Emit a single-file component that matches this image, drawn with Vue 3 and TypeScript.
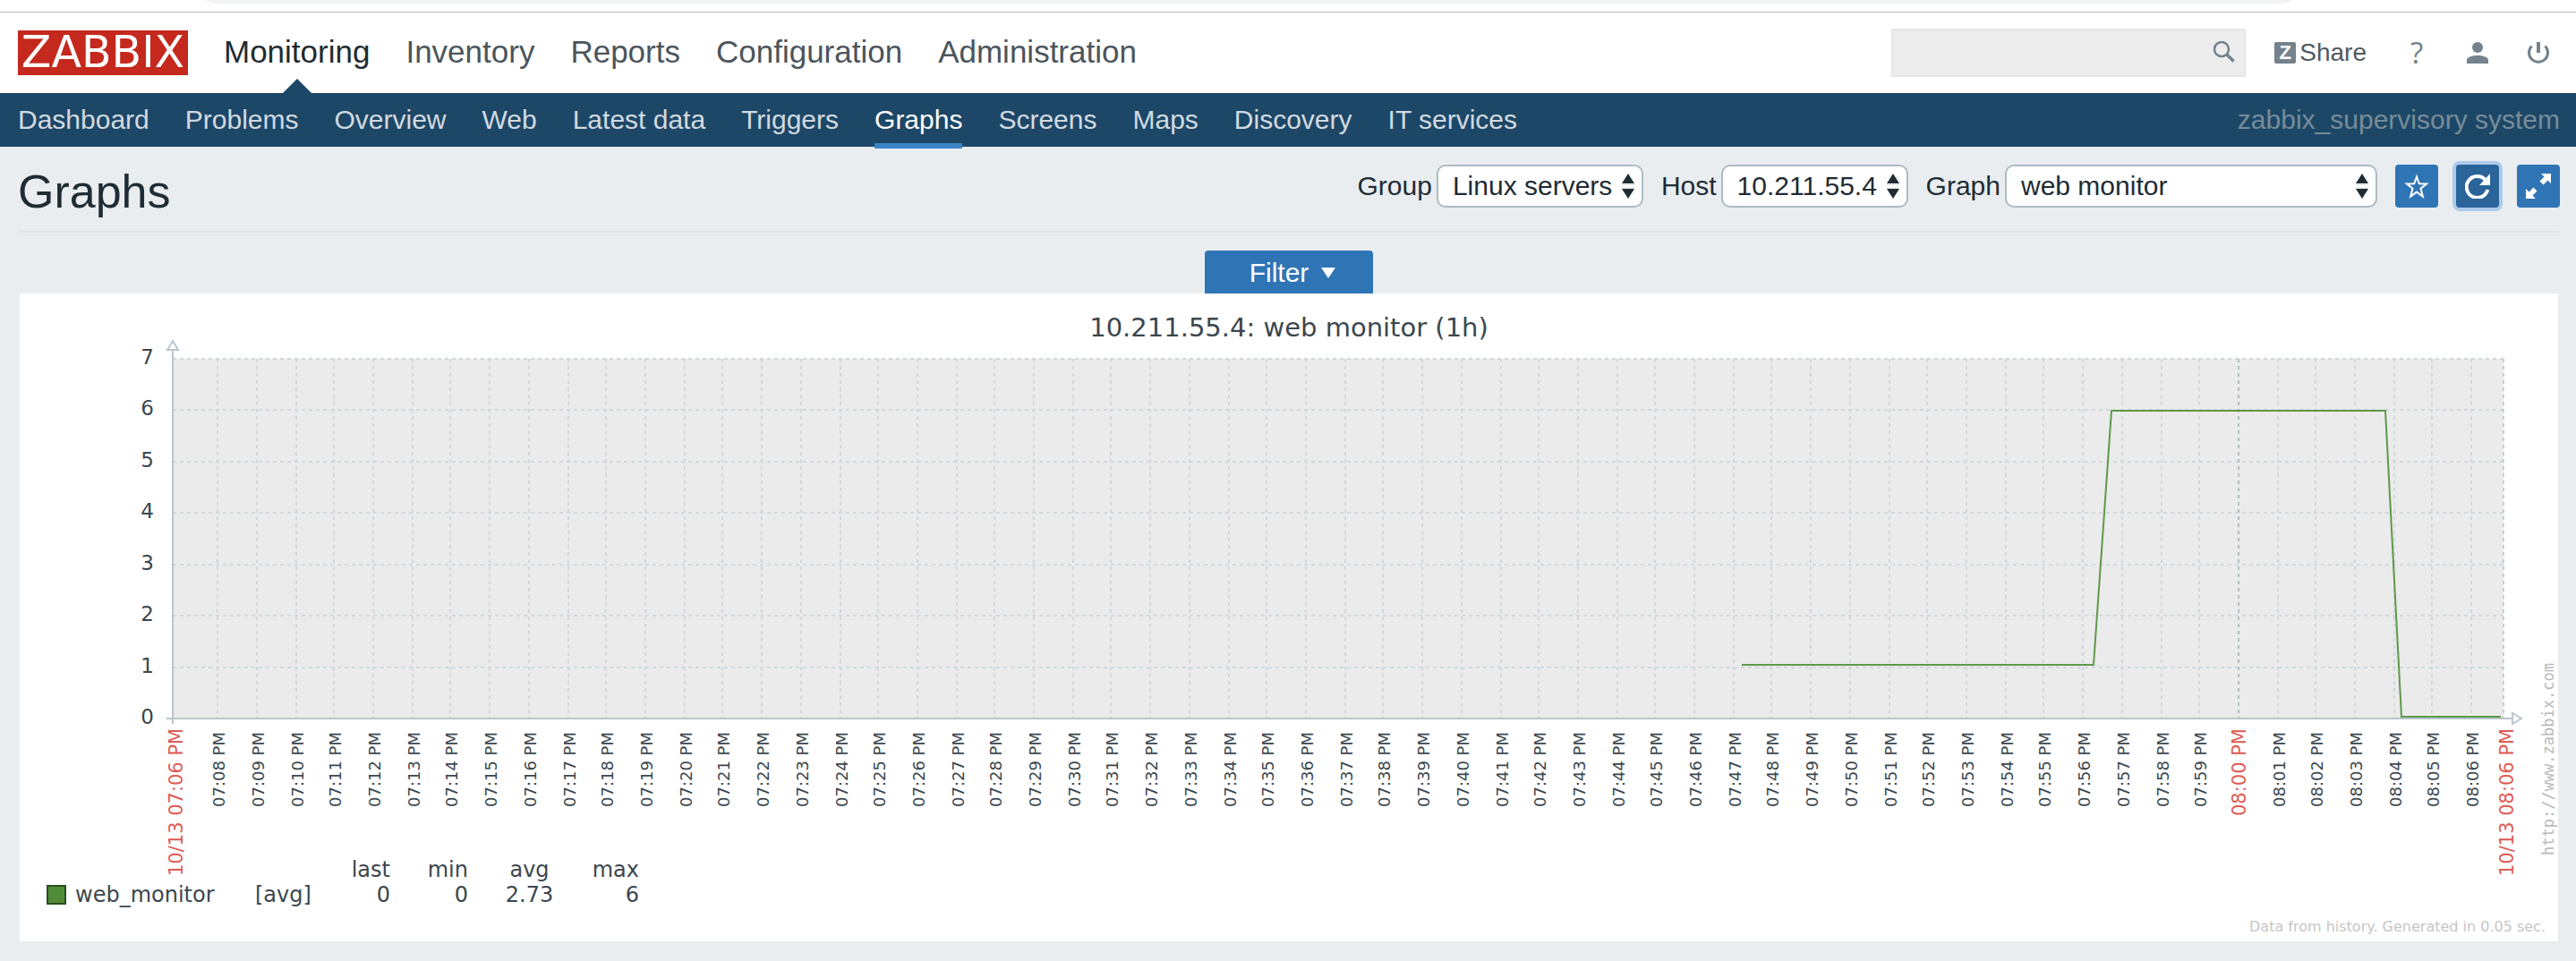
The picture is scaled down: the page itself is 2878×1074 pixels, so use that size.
<script setup lang="ts">
import { ref } from 'vue'

interface LegendRow {
  name: string
  fn: string
  last: string
  min: string
  avg: string
  max: string
}

const mainMenu: string[] = ['Monitoring', 'Inventory', 'Reports', 'Configuration', 'Administration']
const activeMain = 'Monitoring'

const subMenu: string[] = [
  'Dashboard', 'Problems', 'Overview', 'Web', 'Latest data', 'Triggers',
  'Graphs', 'Screens', 'Maps', 'Discovery', 'IT services',
]
const activeSub = 'Graphs'

const search = ref('')
const group = ref('Linux servers')
const host = ref('10.211.55.4')
const graph = ref('web monitor')

const plot = { left: 171, right: 2775, top: 21, bottom: 423 }

const levels = [7, 6, 5, 4, 3, 2, 1, 0].map((value) => ({
  value,
  y: Math.round(plot.bottom - (value * (plot.bottom - plot.top)) / 7),
}))

const pad = (n: number): string => String(n).padStart(2, '0')

const ticks = Array.from({ length: 59 }, (_, i) => {
  const minutes = 8 + i
  const hour = 7 + Math.floor(minutes / 60)
  return {
    label: `${pad(hour)}:${pad(minutes % 60)} PM`,
    x: Math.floor((221.5 + i * 43.41) / 2) * 2 + 1,
    major: minutes % 60 === 0,
  }
})

const seriesPoints = '1924,363 2317,363 2337,79 2643,79 2661,421 2772,421'

const legend: LegendRow[] = [
  { name: 'web_monitor', fn: '[avg]', last: '0', min: '0', avg: '2.73', max: '6' },
]
</script>

<template>
  <div class="page">
    <div class="browser-edge"><div class="address-bar"></div></div>

    <header class="top">
      <a class="logo" href="#">ZABBIX</a>
      <nav class="main-nav" aria-label="Main">
        <a v-for="item in mainMenu" :key="item" href="#" :class="{ active: item === activeMain }">{{ item }}</a>
      </nav>
      <form class="search" @submit.prevent>
        <input v-model="search" type="text" aria-label="Search" />
        <button type="submit" aria-label="Search">
          <svg width="24" height="24" viewBox="0 0 24 24" fill="none" stroke="#73828c">
            <circle cx="9" cy="9" r="8" stroke-width="2.500" />
            <path d="M14.5 14.5 22.5 22.5" stroke-width="3.500" />
          </svg>
        </button>
      </form>
      <div class="tools">
        <a class="share" href="#"><span class="z-badge">Z</span>Share</a>
        <a class="help" href="#">?</a>
        <a href="#" aria-label="User profile">
          <svg width="24" height="24" viewBox="0 0 24 24" fill="#73828c">
            <circle cx="12" cy="6" r="6" />
            <path d="M0 24v-4c0-3 6-5 12-5s12 2 12 5v4z" />
          </svg>
        </a>
        <a href="#" aria-label="Sign out">
          <svg width="24" height="24" viewBox="0 0 24 24" fill="none" stroke="#73828c">
            <path d="M12 0v12" stroke-width="4" />
            <path d="M4.500 4.500A10.500 10.500 0 1 0 19.500 4.500" stroke-width="3" />
          </svg>
        </a>
      </div>
    </header>

    <div class="sub">
      <nav class="sub-nav" aria-label="Monitoring">
        <a v-for="item in subMenu" :key="item" href="#" :class="{ active: item === activeSub }">{{ item }}</a>
      </nav>
      <span class="server">zabbix_supervisory system</span>
    </div>

    <main class="content">
      <div class="title-row">
        <h1>Graphs</h1>
        <form class="controls" @submit.prevent>
          <div class="field">
            <label for="group">Group</label>
            <div class="select">
              <select id="group" v-model="group"><option>Linux servers</option></select>
              <svg class="arrows" width="14" height="28" viewBox="0 0 14 28"><path d="M0 11 7 0l7 11zM0 17h14L7 28z" fill="#1f2c33" /><path d="M0 12.500h14M0 16h14" stroke="#d5d8da" /></svg>
            </div>
          </div>
          <div class="field">
            <label for="host">Host</label>
            <div class="select">
              <select id="host" v-model="host"><option>10.211.55.4</option></select>
              <svg class="arrows" width="14" height="28" viewBox="0 0 14 28"><path d="M0 11 7 0l7 11zM0 17h14L7 28z" fill="#1f2c33" /><path d="M0 12.500h14M0 16h14" stroke="#d5d8da" /></svg>
            </div>
          </div>
          <div class="field">
            <label for="graph">Graph</label>
            <div class="select wide">
              <select id="graph" v-model="graph"><option>web monitor</option></select>
              <svg class="arrows" width="14" height="28" viewBox="0 0 14 28"><path d="M0 11 7 0l7 11zM0 17h14L7 28z" fill="#1f2c33" /><path d="M0 12.500h14M0 16h14" stroke="#d5d8da" /></svg>
            </div>
          </div>
          <div class="buttons">
            <button type="button" aria-label="Add to favourites">
              <svg width="28" height="28" viewBox="0 0 28 28" fill="none" stroke="#fff" stroke-width="2">
                <path d="M14 3.500 16.800 11.300 25 11.500 18.500 16.600 20.800 25.500 14 20.600 7.200 25.500 9.500 16.600 3 11.500 11.200 11.300z" />
              </svg>
            </button>
            <button type="button" class="focused" aria-label="Reset">
              <svg width="28" height="28" viewBox="0 0 28 28">
                <path d="M22.500 6.800A12 12 0 1 0 25.300 18" fill="none" stroke="#fff" stroke-width="4" />
                <path d="M28 0v13H16z" fill="#fff" />
              </svg>
            </button>
            <button type="button" aria-label="Fullscreen">
              <svg width="28" height="28" viewBox="0 0 28 28" fill="#fff">
                <path d="M17 0h11v11l-3.500-3.500-5 5-4-4 5-5z" />
                <path d="M11 28H0V17l3.500 3.500 5-5 4 4-5 5z" />
              </svg>
            </button>
          </div>
        </form>
      </div>

      <div class="filter-row">
        <button type="button" class="filter">Filter<span class="caret"></span></button>
      </div>

      <section class="card">
        <h2>10.211.55.4: web monitor (1h)</h2>
        <svg class="plot" viewBox="0 0 2836 600" role="img" aria-label="web monitor">
          <rect :x="plot.left" :y="plot.top" :width="plot.right - plot.left" :height="plot.bottom - plot.top" fill="#ebebeb" />
          <g class="grid">
            <line v-for="l in levels.slice(0, 7)" :key="l.value" :x1="plot.left" :x2="plot.right" :y1="l.y" :y2="l.y" />
            <line v-for="t in ticks" :key="t.label" :class="{ major: t.major }" :x1="t.x" :x2="t.x" :y1="plot.top" :y2="plot.bottom" />
            <line class="edge" :x1="plot.right" :x2="plot.right" :y1="plot.top" :y2="plot.bottom" />
          </g>
          <g fill="#fff" stroke="#bac6cc" stroke-width="2">
            <path d="M171 11V429M164 423H2784" />
            <path d="M165 11 171 1l6 10z" />
            <path d="M2785 417v12l10-6z" />
          </g>
          <polyline :points="seriesPoints" fill="none" stroke="#5f984b" stroke-width="2" />
          <g class="values">
            <text v-for="l in levels" :key="l.value" x="150" :y="l.y + 6">{{ l.value }}</text>
          </g>
          <g class="times">
            <text
              v-for="t in ticks"
              :key="t.label"
              :class="{ major: t.major }"
              :transform="`translate(${t.x + 8} ${t.major ? 532 : 522}) rotate(-90)`"
            >{{ t.label }}</text>
            <text class="major" transform="translate(182 599) rotate(-90)">10/13 07:06 PM</text>
            <text class="major" transform="translate(2786 599) rotate(-90)">10/13 08:06 PM</text>
          </g>
          <text class="url" transform="translate(2831 576) rotate(-90)">http://www.zabbix.com</text>
        </svg>

        <table class="legend">
          <colgroup>
            <col class="c-name" /><col class="c-fn" /><col class="c-num" /><col class="c-num" /><col class="c-avg" /><col class="c-max" />
          </colgroup>
          <thead>
            <tr><th></th><th></th><th>last</th><th>min</th><th class="mid">avg</th><th>max</th></tr>
          </thead>
          <tbody>
            <tr v-for="row in legend" :key="row.name">
              <td class="name"><span class="swatch"></span>{{ row.name }}</td>
              <td class="fn">{{ row.fn }}</td>
              <td>{{ row.last }}</td>
              <td>{{ row.min }}</td>
              <td class="mid">{{ row.avg }}</td>
              <td>{{ row.max }}</td>
            </tr>
          </tbody>
        </table>
        <p class="generated">Data from history. Generated in 0.05 sec.</p>
      </section>
    </main>
  </div>
</template>

<style>
body {
  background: #e9edf0;
}
</style>

<style scoped>
* {
  box-sizing: border-box;
}
.page {
  min-height: 100vh;
  background: #e9edf0;
  color: #1f2c33;
  font: 30px/36px "Liberation Sans", Arial, sans-serif;
}
a {
  color: inherit;
  text-decoration: none;
}
button,
input,
select {
  font: inherit;
  color: inherit;
  margin: 0;
}
svg {
  display: block;
}
.browser-edge {
  height: 14px;
  background: #fff;
  border-bottom: 1px solid #b6b6b6;
}
.address-bar {
  height: 4px;
  margin: 0 11% 0 8%;
  background: #f1f3f4;
  border-radius: 0 0 16px 16px / 0 0 4px 4px;
}
.top {
  display: flex;
  align-items: center;
  height: 90px;
  padding: 0 30px 0 20px;
  background: #fff;
}
.logo {
  width: 190px;
  height: 50px;
  background: #c5281c;
  color: #fff;
  font: 49px/50px "DejaVu Sans", sans-serif;
  text-align: center;
}
.main-nav {
  display: flex;
  gap: 40px;
  margin-left: 40px;
  font-size: 35px;
  line-height: 88px;
  height: 90px;
  color: #4b555c;
}
.main-nav a {
  position: relative;
}
.main-nav .active {
  color: #1f2c33;
}
.main-nav .active::after {
  content: "";
  position: absolute;
  bottom: 0;
  left: 50%;
  margin-left: -16px;
  border: 16px solid transparent;
  border-top: 0;
  border-bottom-color: #1d4767;
}
.search {
  position: relative;
  width: 396px;
  height: 54px;
  margin-left: auto;
}
.search input {
  width: 100%;
  height: 100%;
  padding: 0 48px 0 12px;
  border: 2px solid #e5e5e5;
  border-radius: 0;
  background: #ececec;
  outline: 0;
}
.search button {
  position: absolute;
  top: 14px;
  right: 12px;
  padding: 0;
  border: 0;
  background: none;
}
.tools {
  display: flex;
  align-items: center;
  gap: 44px;
  margin-left: 32px;
  color: #73828c;
}
.share {
  display: flex;
  align-items: center;
  gap: 4px;
  color: #51595e;
  font-size: 28px;
}
.z-badge {
  width: 24px;
  height: 24px;
  border-radius: 2px;
  background: #73828c;
  color: #fff;
  font-size: 22px;
  font-weight: 700;
  line-height: 24px;
  text-align: center;
}
.help {
  width: 24px;
  font-family: "Open Sans", sans-serif;
  font-size: 33px;
  text-align: center;
}
.sub {
  display: flex;
  justify-content: space-between;
  height: 60px;
  padding: 0 18px 0 20px;
  background: #1d4767;
  line-height: 60px;
}
.sub-nav {
  display: flex;
  gap: 40px;
  color: #d2dae0;
}
.sub-nav a {
  position: relative;
}
.sub-nav .active {
  color: #fff;
}
.sub-nav .active::after {
  content: "";
  position: absolute;
  left: 0;
  right: 0;
  bottom: -2px;
  height: 6px;
  background: #3a84c6;
}
.server {
  color: #768d99;
}
.content {
  padding: 0 18px 22px 20px;
}
.title-row {
  display: flex;
  justify-content: space-between;
  height: 96px;
  padding-top: 20px;
  border-bottom: 2px solid #dfe4e7;
}
h1 {
  margin: 0;
  font-size: 52px;
  font-weight: 400;
  line-height: 60px;
}
.controls {
  display: flex;
  gap: 20px;
  height: 48px;
}
.field {
  display: flex;
  align-items: center;
  gap: 5px;
}
.select {
  position: relative;
}
.select select {
  width: 100%;
  height: 48px;
  padding: 0 32px 0 16px;
  border: 2px solid #acbbc2;
  border-radius: 10px;
  background: #fff;
  appearance: none;
}
.wide {
  width: 416px;
}
.arrows {
  position: absolute;
  top: 10px;
  right: 10px;
  pointer-events: none;
}
.buttons {
  display: flex;
  gap: 20px;
}
.buttons button {
  width: 48px;
  height: 48px;
  padding: 10px;
  border: 0;
  border-radius: 4px;
  background: #2f75b5;
}
.buttons .focused {
  background: #2a6499;
  box-shadow: 0 0 0 4px #adcbea;
}
.filter-row {
  display: flex;
  justify-content: center;
  padding-top: 20px;
}
.filter {
  display: flex;
  align-items: center;
  gap: 14px;
  height: 48px;
  padding: 2px 42px 0 50px;
  border: 0;
  border-radius: 4px 4px 0 0;
  background: #2f75b5;
  color: #fff;
}
.caret {
  border: 8px solid transparent;
  border-top: 12px solid #fff;
  border-bottom: 0;
}
.card {
  margin: 0 2px;
  padding: 24px 0 6px;
  background: #fff;
  color: #3b474e;
  font-family: "DejaVu Sans", sans-serif;
}
h2 {
  margin: 0;
  font-size: 29px;
  font-weight: 400;
  line-height: 28px;
  text-align: center;
}
.plot {
  width: 100%;
  height: auto;
  overflow: visible;
}
.grid line {
  stroke: #d0d8dc;
  stroke-width: 2px;
  stroke-dasharray: 4 4;
}
.grid .edge {
  stroke: #c3ced3;
}
.grid .major {
  stroke: #b0bdc3;
}
.values text {
  fill: #3b474e;
  font-size: 23px;
  text-anchor: end;
}
.times text {
  fill: #3b474e;
  font-size: 18px;
}
.times .major {
  fill: #de5b53;
  font-size: 21px;
}
.url {
  fill: #b9b9b9;
  font-family: "DejaVu Sans Mono", monospace;
  font-size: 17px;
}
.legend {
  position: relative;
  width: 662px;
  margin: -22px 0 0 30px;
  border-collapse: collapse;
  table-layout: fixed;
  font-size: 24px;
  line-height: 28px;
}
.legend th,
.legend td {
  height: 28px;
  padding: 0;
  font-weight: 400;
  text-align: right;
}
.legend .name,
.legend .fn {
  text-align: left;
}
.legend .mid {
  text-align: center;
}
.name {
  display: flex;
  align-items: center;
  gap: 10px;
}
.swatch {
  width: 22px;
  height: 22px;
  border: 2px solid #2a4d1e;
  background: #4f8b39;
}
.c-name {
  width: 233px;
}
.c-fn {
  width: 64px;
}
.c-num {
  width: 87px;
}
.c-avg {
  width: 137px;
}
.c-max {
  width: 54px;
}
.generated {
  margin: 12px 14px 0;
  color: #c6c6c6;
  font-size: 16px;
  line-height: 20px;
  text-align: right;
}
</style>
